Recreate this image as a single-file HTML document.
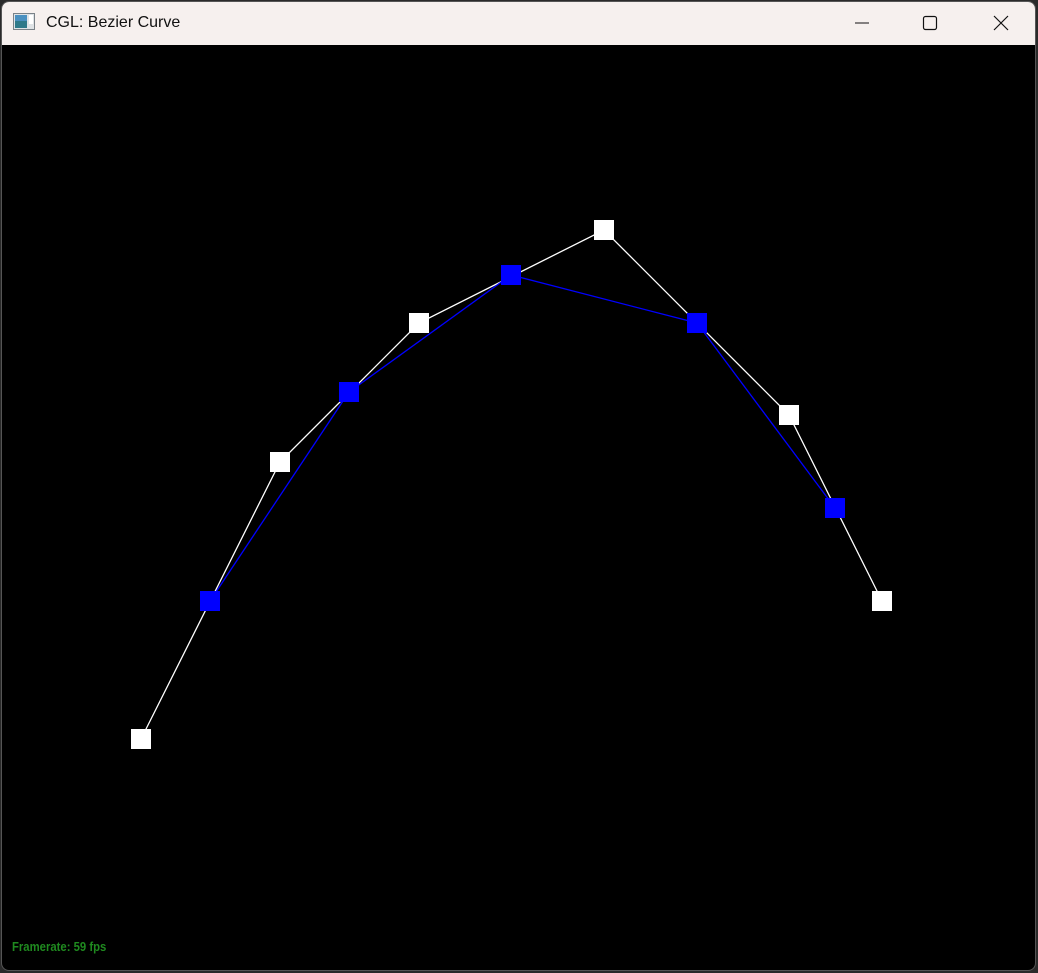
<!DOCTYPE html>
<html><head><meta charset="utf-8"><style>
html,body{margin:0;padding:0;width:1038px;height:973px;overflow:hidden;background:#2a2a2a;}
.win{position:absolute;left:1px;top:1px;width:1035px;height:970px;background:#000;border:1px solid #555;border-radius:8px;overflow:hidden;box-sizing:border-box}
.tb{position:absolute;left:0;top:0;width:100%;height:43px;background:#f6f0ee;}
.title{position:absolute;left:44px;top:12px;font:16px "Liberation Sans",sans-serif;color:#111;}
.fps{position:absolute;left:10px;top:937px;font:bold 13px "Liberation Sans",sans-serif;color:#1f8a1f;transform:scaleX(0.87);transform-origin:left;}
</style></head><body>
<div class="win">
<div class="tb">
<svg style="position:absolute;left:11px;top:11px" width="22" height="18"><rect x="0.5" y="0.5" width="21" height="16" fill="#dfe3e6" stroke="#7a8288"/><rect x="2" y="2" width="12" height="13" fill="#2f7a8a"/><rect x="2" y="2" width="12" height="6" fill="#4a90c0"/><rect x="16" y="2" width="4" height="9" fill="#fff"/></svg>
<div class="title">CGL: Bezier Curve</div>
<svg style="position:absolute;left:838px;top:-1px" width="195" height="44">
<line x1="15" y1="22" x2="29" y2="22" stroke="#111" stroke-width="1"/>
<rect x="83.5" y="15.5" width="13" height="13" rx="2" fill="none" stroke="#111" stroke-width="1.2"/>
<path d="M154 15 L168 29 M168 15 L154 29" stroke="#111" stroke-width="1.2"/>
</svg>
</div>
<svg style="position:absolute;left:-2px;top:-2px" width="1038" height="973">
<polyline points="141,739 280,462 419,323 604,230 789,415 882,601" fill="none" stroke="#fff" stroke-width="1.3"/>
<polyline points="210,601 349,392 511,275 697,323 835,508" fill="none" stroke="#00f" stroke-width="1.3"/>
<g fill="#fff">
<rect x="131" y="729" width="20" height="20"/><rect x="270" y="452" width="20" height="20"/><rect x="409" y="313" width="20" height="20"/><rect x="594" y="220" width="20" height="20"/><rect x="779" y="405" width="20" height="20"/><rect x="872" y="591" width="20" height="20"/>
</g>
<g fill="#00f">
<rect x="200" y="591" width="20" height="20"/><rect x="339" y="382" width="20" height="20"/><rect x="501" y="265" width="20" height="20"/><rect x="687" y="313" width="20" height="20"/><rect x="825" y="498" width="20" height="20"/>
</g>
</svg>
<div class="fps">Framerate: 59 fps</div>
</div>
</body></html>
